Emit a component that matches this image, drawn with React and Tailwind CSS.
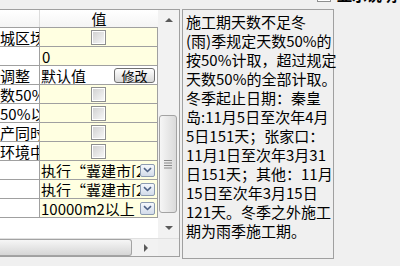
import React from "react";

// ─── DATA ─────────────────────────────────────────────────────────────────────
const ROWS = [
  { name: "城区场", kind: "check" },
  { name: "",       kind: "text",   value: "0" },
  { name: "调整",   kind: "button", value: "默认值", white: true },
  { name: "数50%",  kind: "check" },
  { name: "50%以",  kind: "check" },
  { name: "产同时", kind: "check" },
  { name: "环境中", kind: "check" },
  { name: "",       kind: "select", value: "执行“冀建市[2013]" },
  { name: "",       kind: "select", value: "执行“冀建市[2013]" },
  { name: "",       kind: "select", value: "10000m2以上" },
];

const NOTE = [
  "施工期天数不足冬",
  "(雨)季规定天数50%的",
  "按50%计取，超过规定",
  "天数50%的全部计取。",
  "冬季起止日期：秦皇",
  "岛:11月5日至次年4月",
  "5日151天；张家口：",
  "11月1日至次年3月31",
  "日151天；其他：11月",
  "15日至次年3月15日",
  "121天。冬季之外施工",
  "期为雨季施工期。",
];

// ─── SMALL CONTROLS ───────────────────────────────────────────────────────────
function Check() {
  return (
    <div className="w-[15px] h-[15px] border border-[#8e8f8f] bg-white p-px">
      <div className="w-full h-full bg-gradient-to-br from-[#d2d2d2] to-[#f6f6f6]" />
    </div>
  );
}

function Drop() {
  return (
    <div className="shrink-0 w-[15px] h-[13px] rounded-[2px] border border-[#8d9cb1] bg-gradient-to-b from-[#f5f8fc] to-[#d3dcea] flex items-center justify-center">
      <svg width="9" height="6" viewBox="0 0 9 6">
        <path d="M1 1.2 L4.5 4.5 L8 1.2" fill="none" stroke="#4d6185" strokeWidth="1.6" />
      </svg>
    </div>
  );
}

function Arrow({ dir }) {
  const d = { up: "M0 5 L4 1 L8 5 Z", down: "M0 1 L4 5 L8 1 Z", right: "M1 0 L5 4 L1 8 Z" }[dir];
  const w = dir === "right" ? 6 : 8;
  const h = dir === "right" ? 8 : 6;
  return (
    <svg width={w} height={h} viewBox={`0 0 ${w} ${h}`}>
      <path d={d} fill="#5a5a5a" />
    </svg>
  );
}

// ─── GRID ─────────────────────────────────────────────────────────────────────
function Cell({ row }) {
  if (row.kind === "check")
    return <div className="flex-1 flex items-center justify-center"><Check /></div>;
  if (row.kind === "text")
    return <div className="flex-1 pl-[2px]">{row.value}</div>;
  if (row.kind === "button")
    return (
      <div className="flex-1 flex items-center pl-[1px] pr-[2px]">
        <span className="flex-1">{row.value}</span>
        <div className="w-[41px] h-[15px] rounded-[3px] border border-[#707070] bg-gradient-to-b from-white to-[#d8d8d8] flex items-center justify-center text-[13px] leading-none">
          修改
        </div>
      </div>
    );
  return (
    <div className="flex-1 flex items-center pl-[1px] pr-[2px] min-w-0">
      <span className="flex-1 overflow-hidden whitespace-nowrap">{row.value}</span>
      <Drop />
    </div>
  );
}

function Grid() {
  return (
    <div className="w-[180px] h-[248px] border-t border-b border-r border-[#a0a0a0] flex flex-col bg-white">
      <div className="flex flex-1 min-h-0">
        {/* Table */}
        <div className="w-[158px] flex flex-col">
          <div className="h-[18px] flex border-b border-[#a0a0a0] bg-gradient-to-b from-white to-[#f4f4f4]">
            <div className="w-[40px] border-r border-[#dcdcdc]" />
            <div className="w-[118px] flex items-center justify-center leading-none">值</div>
          </div>
          {ROWS.map((r, i) => (
            <div key={i} className="h-[19px] flex border-b border-[#a0a0a0] leading-none">
              <div className="w-[40px] border-r border-[#a0a0a0] bg-white overflow-hidden whitespace-nowrap flex items-center">
                {r.name}
              </div>
              <div className={`w-[118px] border-r border-[#a0a0a0] flex items-center ${r.white ? "bg-white" : "bg-[#ffffe1]"}`}>
                <Cell row={r} />
              </div>
            </div>
          ))}
          <div className="flex-1 bg-white" />
        </div>

        {/* Vertical scrollbar */}
        <div className="w-[21px] bg-[#f2f2f2] flex flex-col items-center">
          <div className="h-[20px] flex items-center justify-center"><Arrow dir="up" /></div>
          <div className="flex-1 w-full px-px pt-[85px] pb-[5px]">
            <div className="h-[98px] w-[18px] rounded-[3px] border border-[#a3a3a3] bg-gradient-to-r from-[#f6f6f6] to-[#dadada] flex items-center justify-center">
              <svg width="8" height="9" viewBox="0 0 8 9">
                <path d="M0 0.5 H8 M0 3 H8 M0 5.5 H8 M0 8 H8" stroke="#8a8a8a" strokeWidth="1" />
              </svg>
            </div>
          </div>
          <div className="h-[20px] flex items-center justify-center"><Arrow dir="down" /></div>
        </div>
      </div>

      {/* Horizontal scrollbar */}
      <div className="h-[18px] flex bg-[#f2f2f2] border-t border-[#e0e0e0]">
        <div className="w-[132px] h-full rounded-r-[3px] border border-l-0 border-[#a3a3a3] bg-gradient-to-b from-[#f6f6f6] to-[#d6d6d6]" />
        <div className="w-[26px] flex items-center justify-center pl-[2px]"><Arrow dir="right" /></div>
        <div className="w-[21px] bg-[#f0f0f0]" />
      </div>
    </div>
  );
}

// ─── APP ──────────────────────────────────────────────────────────────────────
export default function App() {
  return (
    <div
      className="w-[400px] h-[266px] bg-[#f0f0f0] overflow-hidden flex flex-col text-[15px] text-black"
      style={{ fontFamily: '"Noto Sans CJK SC", "Noto Sans", sans-serif' }}
    >
      {/* Control clipped by the top edge */}
      <div className="h-[14px] mt-[-12px] flex items-end gap-[6px] pl-[317px] shrink-0">
        <div className="w-[14px] h-[14px] border border-[#8e8f8f] bg-white" />
        <span className="font-bold leading-none">显示说明</span>
      </div>

      <div className="flex items-start mt-[7px]">
        <Grid />

        {/* Description panel */}
        <div className="ml-[2px] w-[152px] h-[250px] border border-[#a0a0a0] pl-[3px] pt-[2px] flex flex-col">
          {NOTE.map((l, i) => (
            <div key={i} className="h-[19px] leading-[19px] whitespace-nowrap">{l}</div>
          ))}
        </div>
      </div>
    </div>
  );
}
